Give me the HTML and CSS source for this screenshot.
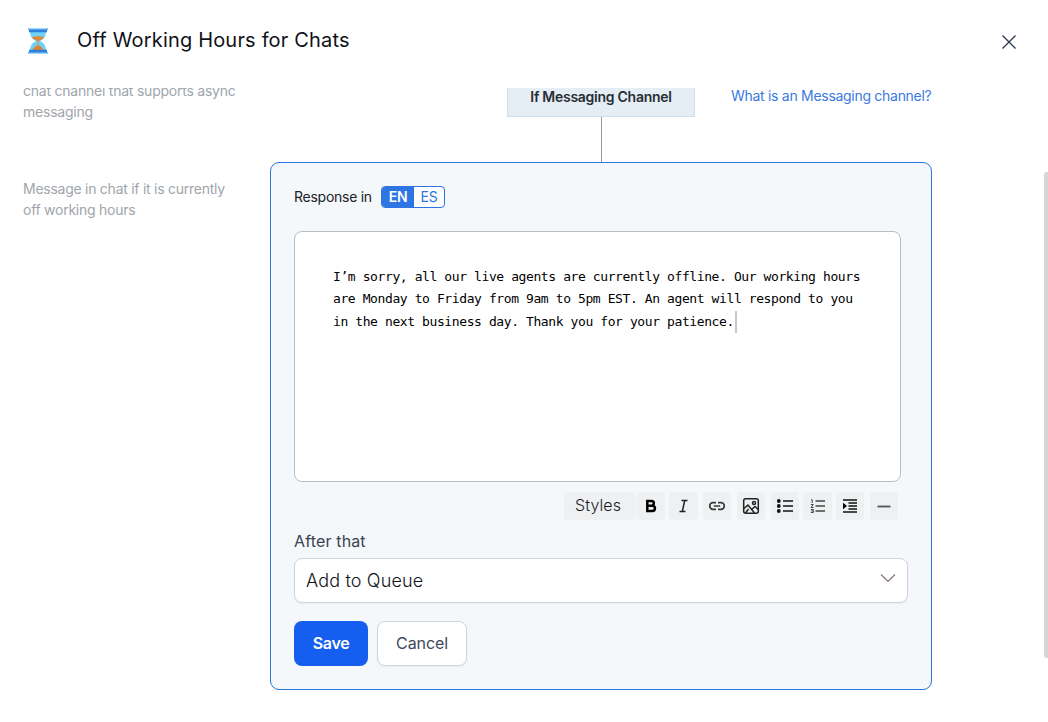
FILE: index.html
```html
<!DOCTYPE html>
<html lang="en">
<head>
<meta charset="utf-8">
<title>Off Working Hours for Chats</title>
<link rel="stylesheet" href="styles.css">
</head>
<body>
<div class="dialog">
  <header class="header">
    <svg class="hourglass" width="20" height="26" viewBox="0 0 20 26">
      <path d="M2 3h16c0 5.500-2 8-6 10 4 2 6 4.500 6 10H2c0-5.500 2-8 6-10C4 11 2 8.500 2 3z" fill="#6fd2fa"/>
      <path d="M4 9.200c3-1.200 9-1.200 12 0-1 1.700-3 2.700-5.400 3.800h-1.200C7 11.900 5 10.900 4 9.200z" fill="#dd8a3c"/>
      <path d="M9.500 13h1v4.500h-1z" fill="#dd8a3c"/>
      <path d="M4.500 22c.8-2.500 3.500-4.500 5.500-4.700 2 .2 4.700 2.200 5.500 4.700z" fill="#e08434"/>
      <path d="M1 1h18v3.300H1zM1 21.700h18V25H1z" fill="#2f7fdc"/>
      <path d="M0 .5h20v1.600H0zM0 23.900h20v1.600H0z" fill="#52a8ee"/>
    </svg>
    <h1 class="title">Off Working Hours for Chats</h1>
    <svg class="close" width="16" height="16" viewBox="0 0 16 16" fill="none" stroke="#26304a" stroke-width="1.2"><path d="M1.500 1.500l13 13M14.500 1.500l-13 13"/></svg>
  </header>
  <main class="viewport">
    <section class="step step-channel">
      <p class="note">chat channel that supports async messaging</p>
      <div class="branch">
        <div class="node-col">
          <div class="node">If Messaging Channel</div>
          <div class="connector"></div>
        </div>
        <a class="help">What is an Messaging channel?</a>
      </div>
    </section>
    <section class="step">
      <p class="note note-message">Message in chat if it is currently off working hours</p>
      <div class="card">
        <div class="lang-row">
          <span class="lang-label">Response in</span>
          <div class="langs"><span class="lang active">EN</span><span class="lang">ES</span></div>
        </div>
        <div class="editor">I’m sorry, all our live agents are currently offline. Our working hours<br>are Monday to Friday from 9am to 5pm EST. An agent will respond to you<br>in the next business day. Thank you for your patience.<span class="caret"></span></div>
        <div class="toolbar">
          <span class="tool styles">Styles</span>
          <span class="tool bold"><svg width="16" height="16" viewBox="0 0 16 16" fill="none" stroke="#000" stroke-width="2.500"><path d="M4.300 3h4.200a2.300 2.300 0 0 1 0 4.700H4.300zM4.300 7.700h5a2.650 2.650 0 0 1 0 5.300h-5z"/></svg></span>
          <span class="tool italic"><svg width="16" height="16" viewBox="0 0 16 16" fill="none" stroke="#222" stroke-width="1.500"><path d="M5.500 2.500h6M3.500 13.500h6M8.700 2.500L6.300 13.500"/></svg></span>
          <span class="tool link"><svg width="18" height="16" viewBox="0 0 18 16" fill="none" stroke="#3a3a3a" stroke-width="1.700"><path d="M8 4.700H5a3.300 3.300 0 0 0 0 6.600h3M10 4.700h3a3.300 3.300 0 0 1 0 6.600h-3M5.800 8h6.400"/></svg></span>
          <span class="tool image"><svg width="18" height="18" viewBox="0 0 18 18" fill="none" stroke="#222" stroke-width="1.500"><rect x="1.700" y="1.700" width="14.600" height="14.600" rx="2"/><circle cx="12" cy="6" r="1.500"/><path d="M2 11.500l4-3.500 6.500 8M9.500 12.500l3.500-3 3.200 3M3.500 16l3-4"/></svg></span>
          <span class="tool bullets"><svg width="18" height="16" viewBox="0 0 18 16" fill="none" stroke="#111" stroke-width="1.700"><path d="M7 3h10M7 8h10M7 13h10"/><path d="M2.800 3h.01M2.800 8h.01M2.800 13h.01" stroke-width="3.800" stroke-linecap="round"/></svg></span>
          <span class="tool numbers"><svg width="16" height="16" viewBox="0 0 16 16" fill="none" stroke="#444" stroke-width="1.600"><path d="M5.500 3H15M5.500 8H15M5.500 13H15"/><path d="M1 1.800h1.200V5M.8 6.500h2.500L1 9.500h2.500M.8 11.500h2.500v3H.8M1.300 13h2" stroke-width="1"/></svg></span>
          <span class="tool indent"><svg width="16" height="16" viewBox="0 0 16 16" fill="none" stroke="#111" stroke-width="1.700"><path d="M1 2h14M6.500 5h8.500M6.500 8h8.500M6.500 11h8.500M1 14h14"/><path d="M1 4.800v6.400L5 8z" fill="#000" stroke="none"/></svg></span>
          <span class="tool rule"><svg width="16" height="16" viewBox="0 0 16 16" stroke="#555" stroke-width="1.800"><path d="M1.500 8.500h13"/></svg></span>
        </div>
        <div class="after">After that</div>
        <div class="select"><span>Add to Queue</span>
          <svg width="16" height="10" viewBox="0 0 16 10" fill="none" stroke="#85726f" stroke-width="1.200"><path d="M1 1.500l7 7 7-7"/></svg>
        </div>
        <div class="actions"><button class="btn save">Save</button><button class="btn cancel">Cancel</button></div>
      </div>
    </section>
    <div class="scrollbar"></div>
  </main>
</div>
</body>
</html>
```
FILE: styles.css
```css
* { box-sizing: border-box; }
body { margin: 0; background: #fff; font-family: Inter, "Liberation Sans", sans-serif; }
.dialog { height: 722px; display: flex; flex-direction: column; overflow: hidden; }
.header { height: 88px; flex: none; display: flex; align-items: flex-start; padding: 27px 31px 0 28px; }
.hourglass { margin-top: 1px; margin-right: 29px; }
.title { margin: 0; flex: 1; font-size: 20px; line-height: 26px; font-weight: 400; color: #101218; letter-spacing: 0.18px; }
.close { margin-top: 7px; }
.viewport { position: relative; flex: 1; overflow: hidden; padding-left: 23px; }
.step { display: grid; grid-template-columns: 247px 662px; }
.step-channel { height: 74px; }
.note { margin: -8px 0 0; font-size: 14px; line-height: 21px; color: #a0a5ac; width: 217px; letter-spacing: -0.23px; }
.note-message { margin-top: 16px; letter-spacing: -0.26px; }
.branch { display: flex; padding-left: 237px; }
.node-col { width: 188px; display: flex; flex-direction: column; align-items: center; }
.node { width: 188px; height: 29px; background: #e5edf5; border: 1px solid #d0dfed; border-top: 0; text-align: center; font-size: 14px; font-weight: 600; line-height: 18px; letter-spacing: -0.27px; color: #282d33; white-space: nowrap; }
.connector { width: 1px; height: 45px; background: #989ba2; }
.help { margin-left: 36px; font-size: 14px; line-height: 16px; letter-spacing: -0.29px; color: #3979e2; white-space: nowrap; }
.card { height: 528px; background: #f4f8fb; border: 1px solid #2b75df; border-radius: 9px; padding: 23px; }
.lang-row { display: flex; align-items: center; gap: 9px; height: 22px; font-size: 14px; color: #202226; }
.lang-label { width: 78px; letter-spacing: -0.26px; white-space: nowrap; line-height: 20px; margin-top: -1px; }
.langs { display: flex; width: 64px; height: 22px; border: 1px solid #2c75e3; border-radius: 4px; overflow: hidden; background: #fff; }
.lang { flex: 1; text-align: center; font-size: 14px; line-height: 20px; color: #2c75e3; letter-spacing: -0.2px; }
.lang.active { flex: 0 0 32px; background: #2c75e3; color: #fff; font-weight: 600; }
.editor { margin-top: 23px; width: 607px; height: 251px; background: #fff; border: 1px solid #b9bec6; border-radius: 8px; padding: 34px 38px; font: 13px/22.4px "DejaVu Sans Mono", monospace; letter-spacing: -0.403px; color: #000; white-space: nowrap; }
.caret { display: inline-block; width: 2px; height: 22px; background: #c8c8c8; vertical-align: middle; margin-left: 1px; }
.toolbar { display: flex; margin: 10px 0 0 270px; height: 28px; }
.tool { width: 28px; height: 28px; margin-right: 6px; border-radius: 4px; background: #eff0f2; display: flex; align-items: center; justify-content: center; flex: none; }
.styles { width: 72px; margin-right: 1px; font-size: 16px; line-height: 20px; font-weight: 300; color: #15181d; padding: 0 4px 2px 0; letter-spacing: 0.1px; }
.bold { margin-right: 4px; }
.italic { width: 29px; margin-right: 5px; }
.bullets { margin-right: 4px; }
.numbers { width: 29px; margin-right: 4px; }
.after { margin-top: 11px; font-size: 16px; line-height: 21px; color: #3b4251; letter-spacing: 0.15px; }
.select { margin-top: 6px; width: 614px; height: 45px; border: 1px solid #d0d4dc; border-radius: 8px; background: #fff; display: flex; justify-content: space-between; align-items: center; padding: 0 11px; font-size: 18px; font-weight: 300; letter-spacing: 0.16px; color: #101318; box-shadow: 0 1px 2px #1018280d; }
.select svg { margin-top: -6px; }
.actions { display: flex; gap: 9px; margin-top: 18px; }
.btn { height: 45px; border-radius: 8px; font-family: inherit; font-size: 16px; padding: 0 0 2px; }
.save { width: 74px; border: 0; background: #155eef; color: #fff; font-weight: 600; letter-spacing: -0.3px; }
.cancel { width: 90px; border: 1px solid #d0d4dc; background: #fff; color: #414858; box-shadow: 0 1px 2px #1018280d; letter-spacing: -0.1px; }
.scrollbar { position: absolute; right: 0; top: 84px; width: 4px; height: 486px; background: #d6d6d6; border-radius: 3px 0 0 3px; }
```
